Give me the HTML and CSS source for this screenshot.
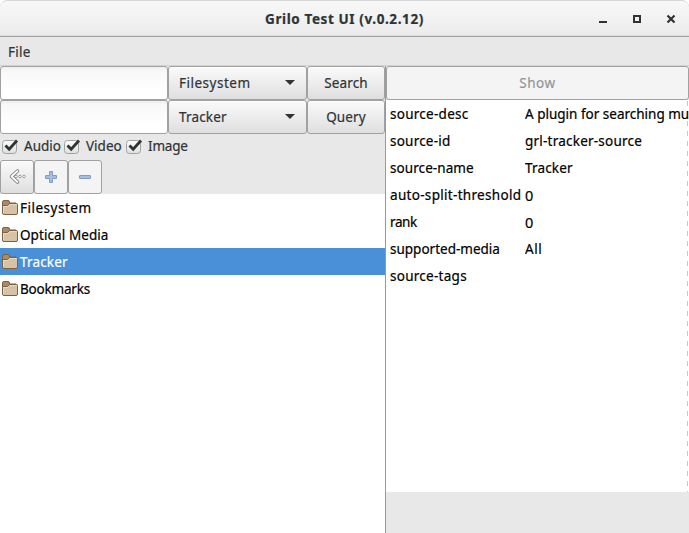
FILE: index.html
```html
<!DOCTYPE html>
<html lang="en">
<head>
<meta charset="utf-8">
<title>Grilo Test UI</title>
<link rel="stylesheet" href="styles.css">
</head>
<body>
<svg class="defs" width="0" height="0">
  <defs>
    <linearGradient id="box" x1="0" y1="0" x2="0" y2="1"><stop offset="0" stop-color="#fdfdfd"/><stop offset="1" stop-color="#dedede"/></linearGradient>
    <symbol id="folder" viewBox="0 0 17 16">
      <path d="M.5 13V2Q.5.5 2 .5H6Q7.500.5 7.500 2V3H14V13Z" fill="#a58b6b" stroke="#806040"/>
      <path d="M2 14.500Q.5 14.500.5 13V5.500H5.500L7.500 3.500H14.500Q15.500 3.500 15.500 4.500V13Q15.500 14.500 14 14.500Z" fill="#d6c3a5" stroke="#806040"/>
      <path d="M1.500 13V6.500H6L8 4.500H14.500" fill="none" stroke="#e8dbc5"/>
    </symbol>
    <symbol id="check" viewBox="0 0 18 16">
      <rect x="1.500" y="2.500" width="14" height="13" rx="3" fill="url(#box)" stroke="#a1a1a1"/>
      <path d="M4.500 7.500L8.200 11.300L16 2.500" fill="none" stroke="#2e3436" stroke-width="2.800"/>
    </symbol>
  </defs>
</svg>
<div class="window">
  <header class="titlebar">
    <h1 class="t-title">Grilo Test UI (v.0.2.12)</h1>
    <div class="controls">
      <svg width="90" height="16" viewBox="0 0 90 16" fill="none" stroke="#2e3436" stroke-width="2"><path d="M0 11H8M35 5H41V11H35Z"/><path d="M68.500 4.500L75.500 11.500M75.500 4.500L68.500 11.500" stroke-width="2.200"/></svg>
    </div>
  </header>
  <nav class="menubar"><span class="t-file">File</span></nav>
  <main class="panes">
    <section class="left">
      <div class="form">
        <div class="entry"></div>
        <div class="button combo"><span class="t-fs">Filesystem</span><i class="arrow"></i></div>
        <div class="button"><span class="t-search">Search</span></div>
        <div class="entry"></div>
        <div class="button combo"><span class="t-tracker">Tracker</span><i class="arrow"></i></div>
        <div class="button"><span class="t-query">Query</span></div>
      </div>
      <div class="checks">
        <div class="check"><svg width="18" height="16"><use href="#check"/></svg><span class="t-audio">Audio</span></div>
        <div class="check"><svg width="18" height="16"><use href="#check"/></svg><span class="t-video">Video</span></div>
        <div class="check"><svg width="18" height="16"><use href="#check"/></svg><span class="t-image">Image</span></div>
      </div>
      <div class="tools">
        <div class="button"><svg width="18" height="18" viewBox="0 0 18 18"><path d="M9.500 3L3.500 8.500L9.500 14" fill="none" stroke="#777" stroke-width="3.400" stroke-linecap="round" stroke-linejoin="round"/><path d="M9.500 3L3.500 8.500L9.500 14" fill="none" stroke="#fff" stroke-width="1.700" stroke-linecap="round" stroke-linejoin="round"/><g fill="#fff" stroke="#888" stroke-width=".8"><circle cx="8" cy="8.500" r="1.300"/><circle cx="12" cy="8.500" r="1.300"/><circle cx="16" cy="8.500" r="1.300"/></g></svg></div>
        <div class="button off"><svg width="18" height="18" viewBox="0 0 18 18"><path d="M7.500 3.500H10.500V7.500H14.500V10.500H10.500V14.500H7.500V10.500H3.500V7.500H7.500Z" fill="#a6bedd" stroke="#7f9dc8" stroke-linejoin="round"/></svg></div>
        <div class="button off"><svg width="18" height="18" viewBox="0 0 18 18"><rect x="3.500" y="7.500" width="11" height="3" rx=".5" fill="#a6bedd" stroke="#7f9dc8"/></svg></div>
      </div>
      <ul class="list">
        <li><svg width="17" height="16"><use href="#folder"/></svg><span class="t-fs">Filesystem</span></li>
        <li><svg width="17" height="16"><use href="#folder"/></svg><span class="t-optical">Optical Media</span></li>
        <li class="selected"><svg width="17" height="16"><use href="#folder"/></svg><span class="t-tracker">Tracker</span></li>
        <li><svg width="17" height="16"><use href="#folder"/></svg><span class="t-book">Bookmarks</span></li>
      </ul>
    </section>
    <section class="right">
      <div class="button off show"><span class="t-show">Show</span></div>
      <div class="details">
        <dl>
          <dt class="t-desc">source-desc</dt><dd class="t-plugin">A plugin for searching multimedia</dd>
          <dt class="t-id">source-id</dt><dd class="t-grl">grl-tracker-source</dd>
          <dt class="t-name">source-name</dt><dd class="t-tracker">Tracker</dd>
          <dt class="t-auto">auto-split-threshold</dt><dd class="t-zero">0</dd>
          <dt class="t-rank">rank</dt><dd class="t-zero">0</dd>
          <dt class="t-media">supported-media</dt><dd class="t-all">All</dd>
          <dt class="t-tags">source-tags</dt><dd></dd>
        </dl>
      </div>
    </section>
  </main>
</div>
</body>
</html>
```
FILE: styles.css
```css
* { box-sizing: border-box; }
body { margin: 0; background: #fff; overflow: hidden; }
.defs { position: absolute; }
.window { width: 689px; height: 533px; display: flex; flex-direction: column; overflow: hidden; background: #e8e8e8; border-radius: 7px 7px 0 0; font: 13.5px/18px "Noto Sans", "Open Sans", sans-serif; color: #2e3436; white-space: nowrap; -webkit-text-stroke: .2px; }
.titlebar { height: 37px; display: grid; grid-template-columns: 1fr auto 1fr; align-items: center; background: linear-gradient(#f8f8f8, #ebebeb); border: 1px solid #d8d8d8; border-width: 1px 0 0; border-radius: 7px 7px 0 0; box-shadow: inset 0 -1px #a1a1a1, inset 0 -2px #ddd; }
.titlebar h1 { grid-column: 2; margin: 0; font-size: 13.5px; font-weight: 700; }
.controls { display: flex; justify-content: flex-end; }
.controls svg { display: block; }
.menubar { height: 29px; padding: 6px 8px 0; border-bottom: 1px solid #d2d2d2; }
.panes { flex: 1; display: flex; min-height: 0; }
.left { width: 386px; border-right: 1px solid #999; display: flex; flex-direction: column; }
.form { display: grid; grid-template-columns: 168px 139px 78px; grid-auto-rows: 34px; }
.entry, .button { border: 1px solid #a1a1a1; border-radius: 3px; }
.entry { background: linear-gradient(#efefef, #f8f8f8 4px, #fff 75%); }
.button { display: flex; align-items: center; justify-content: center; background: linear-gradient(#fafafa, #dfdfdf); box-shadow: inset 0 1px #fff; }
.combo { justify-content: space-between; padding: 0 11px 0 10px; }
.arrow { border: 5px solid transparent; border-top-color: #2e3436; border-bottom: 0; margin-bottom: 2px; }
.checks { height: 26px; display: flex; padding-left: 1px; }
.check { width: 62px; display: flex; align-items: center; gap: 5px; padding-bottom: 2px; }
.check svg { flex: none; }
.tools { display: flex; height: 34px; }
.tools .button { width: 34px; }
.button.off { background: #f4f4f4; box-shadow: none; color: #939697; }
.list { flex: 1; margin: 0; padding: 0; list-style: none; background: #fff; color: #000; }
.list li { height: 27px; display: flex; align-items: center; gap: 1px; padding: 1px 0 0 2px; }
.list .selected { background: #4a90d9; color: #fff; }
.right { width: 303px; display: flex; flex-direction: column; }
.show { height: 34px; }
.details { height: 392px; padding: 1px 0 0 4px; color: #000; overflow: hidden; background: repeating-linear-gradient(#fff 0 1px, #c8c8c8 1px 6px, #fff 6px 10px) 301px 0 / 1px 100% no-repeat, #fff; }
dl { margin: 0; display: grid; grid-template-columns: 135px 1fr; grid-auto-rows: 27px; line-height: 27px; }
dd { margin: 0; overflow: hidden; }
.t-title { letter-spacing: .6px; }
.t-fs, .t-show { letter-spacing: .5px; }
.t-file, .t-grl { letter-spacing: .22px; }
.t-search, .t-query, .t-tracker { letter-spacing: .15px; }
.t-optical, .t-name { letter-spacing: .08px; }
.t-book, .t-image { letter-spacing: -.2px; }
.t-desc, .t-tags { letter-spacing: .27px; }
.t-id { letter-spacing: .22px; }
.t-auto { letter-spacing: .31px; }
.t-rank { letter-spacing: -.4px; }
.t-all { letter-spacing: .6px; }
.t-zero { font-size: 14.5px; }
```
